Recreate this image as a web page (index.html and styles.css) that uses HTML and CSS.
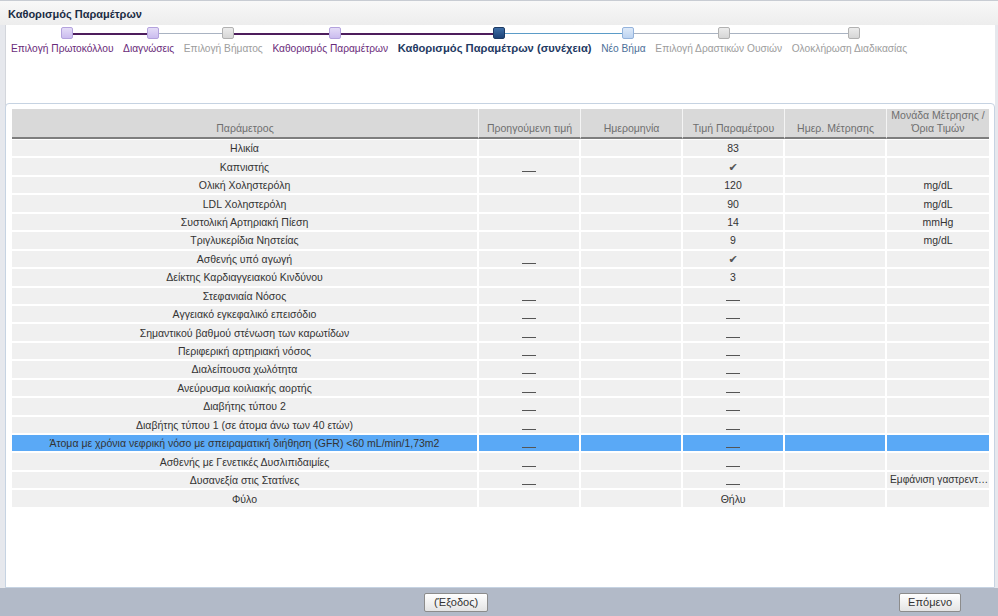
FILE: index.html
```html
<!DOCTYPE html>
<html lang="el">
<head>
<meta charset="utf-8">
<title>Καθορισμός Παραμέτρων</title>
<link rel="stylesheet" href="styles.css">
</head>
<body>
<div class="app">
  <div class="titlebar">Καθορισμός Παραμέτρων</div>
  <div class="main">
    <div class="steps">
      <div class="step done r-purple">
        <div class="mark-row"><span class="mark"></span></div>
        <div class="label">Επιλογή Πρωτοκόλλου</div>
      </div>
      <div class="step done l-purple r-grey">
        <div class="mark-row"><span class="mark"></span></div>
        <div class="label">Διαγνώσεις</div>
      </div>
      <div class="step skipped l-grey r-purple">
        <div class="mark-row"><span class="mark"></span></div>
        <div class="label">Επιλογή Βήματος</div>
      </div>
      <div class="step done l-purple r-purple">
        <div class="mark-row"><span class="mark"></span></div>
        <div class="label">Καθορισμός Παραμέτρων</div>
      </div>
      <div class="step current l-purple r-blue">
        <div class="mark-row"><span class="mark"></span></div>
        <div class="label">Καθορισμός Παραμέτρων (συνέχεια)</div>
      </div>
      <div class="step next l-blue r-grey">
        <div class="mark-row"><span class="mark"></span></div>
        <div class="label">Νέο Βήμα</div>
      </div>
      <div class="step future l-grey r-grey">
        <div class="mark-row"><span class="mark"></span></div>
        <div class="label">Επιλογή Δραστικών Ουσιών</div>
      </div>
      <div class="step future l-grey">
        <div class="mark-row"><span class="mark"></span></div>
        <div class="label">Ολοκλήρωση Διαδικασίας</div>
      </div>
    </div>
    <div class="panel">
      <table class="grid">
        <colgroup>
          <col class="c-param"><col class="c-n"><col class="c-n"><col class="c-n"><col class="c-n"><col class="c-n">
        </colgroup>
        <thead>
          <tr>
            <th>Παράμετρος</th>
            <th>Προηγούμενη τιμή</th>
            <th>Ημερομηνία</th>
            <th>Τιμή Παραμέτρου</th>
            <th>Ημερ. Μέτρησης</th>
            <th>Μονάδα Μέτρησης /<br>Όρια Τιμών</th>
          </tr>
        </thead>
        <tbody>
          <tr><td>Ηλικία</td><td></td><td></td><td>83</td><td></td><td></td></tr>
          <tr><td>Καπνιστής</td><td><span class="dash"></span></td><td></td><td><span class="check">✔</span></td><td></td><td></td></tr>
          <tr><td>Ολική Χοληστερόλη</td><td></td><td></td><td>120</td><td></td><td>mg/dL</td></tr>
          <tr><td>LDL Χοληστερόλη</td><td></td><td></td><td>90</td><td></td><td>mg/dL</td></tr>
          <tr><td>Συστολική Αρτηριακή Πίεση</td><td></td><td></td><td>14</td><td></td><td>mmHg</td></tr>
          <tr><td>Τριγλυκερίδια Νηστείας</td><td></td><td></td><td>9</td><td></td><td>mg/dL</td></tr>
          <tr><td>Ασθενής υπό αγωγή</td><td><span class="dash"></span></td><td></td><td><span class="check">✔</span></td><td></td><td></td></tr>
          <tr><td>Δείκτης Καρδιαγγειακού Κινδύνου</td><td></td><td></td><td>3</td><td></td><td></td></tr>
          <tr><td>Στεφανιαία Νόσος</td><td><span class="dash"></span></td><td></td><td><span class="dash"></span></td><td></td><td></td></tr>
          <tr><td>Αγγειακό εγκεφαλικό επεισόδιο</td><td><span class="dash"></span></td><td></td><td><span class="dash"></span></td><td></td><td></td></tr>
          <tr><td>Σημαντικού βαθμού στένωση των καρωτίδων</td><td><span class="dash"></span></td><td></td><td><span class="dash"></span></td><td></td><td></td></tr>
          <tr><td>Περιφερική αρτηριακή νόσος</td><td><span class="dash"></span></td><td></td><td><span class="dash"></span></td><td></td><td></td></tr>
          <tr><td>Διαλείπουσα χωλότητα</td><td><span class="dash"></span></td><td></td><td><span class="dash"></span></td><td></td><td></td></tr>
          <tr><td>Ανεύρυσμα κοιλιακής αορτής</td><td><span class="dash"></span></td><td></td><td><span class="dash"></span></td><td></td><td></td></tr>
          <tr><td>Διαβήτης τύπου 2</td><td><span class="dash"></span></td><td></td><td><span class="dash"></span></td><td></td><td></td></tr>
          <tr><td>Διαβήτης τύπου 1 (σε άτομα άνω των 40 ετών)</td><td><span class="dash"></span></td><td></td><td><span class="dash"></span></td><td></td><td></td></tr>
          <tr class="selected"><td>Άτομα με χρόνια νεφρική νόσο με σπειραματική διήθηση (GFR) &lt;60 mL/min/1,73m2</td><td><span class="dash"></span></td><td></td><td><span class="dash"></span></td><td></td><td></td></tr>
          <tr><td>Ασθενής με Γενετικές Δυσλιπιδαιμίες</td><td><span class="dash"></span></td><td></td><td><span class="dash"></span></td><td></td><td></td></tr>
          <tr><td>Δυσανεξία στις Στατίνες</td><td><span class="dash"></span></td><td></td><td><span class="dash"></span></td><td></td><td class="left">Εμφάνιση γαστρεντ…</td></tr>
          <tr><td>Φύλο</td><td></td><td></td><td>Θήλυ</td><td></td><td></td></tr>
        </tbody>
      </table>
    </div>
  </div>
  <div class="footer">
    <button class="btn">(Έξοδος)</button>
    <button class="btn">Επόμενο</button>
  </div>
</div>
</body>
</html>
```

FILE: styles.css
```css
html, body {
  margin: 0;
  padding: 0;
  height: 100%;
  overflow: hidden;
}
body {
  font-family: "Liberation Sans", Arial, sans-serif;
  font-size: 11px;
  color: #333;
  background: #e6e8ed;
}
.app {
  width: 998px;
  height: 616px;
  display: flex;
  flex-direction: column;
}
.titlebar {
  border-top: 1px solid #c8ccd3;
  background: linear-gradient(#f8f8f8, #ededed);
  padding: 2px 8px 0;
  box-sizing: border-box;
  height: 25px;
  line-height: 22px;
  font-weight: bold;
  color: #1b2c44;
}
.main {
  flex: 1;
  margin: 0 3px 0 5px;
  background: #fff;
  border-left: 1px solid #d3d6dc;
  display: flex;
  flex-direction: column;
  min-height: 0;
}
.steps {
  height: 76px;
  box-sizing: border-box;
  padding: 2px 0 0 5px;
  display: flex;
  align-items: flex-start;
}
.step {
  display: flex;
  flex-direction: column;
  align-items: stretch;
}
.mark-row {
  position: relative;
  height: 14px;
  display: flex;
  justify-content: center;
  align-items: flex-start;
}
.mark-row::before,
.mark-row::after {
  content: "";
  position: absolute;
  top: 6px;
  height: 1px;
  background: transparent;
}
.mark-row::before { left: 0; right: 50%; }
.mark-row::after { right: 0; left: 50%; }
.l-purple .mark-row::before { background: #4d1d5c; height: 2px; }
.r-purple .mark-row::after { background: #4d1d5c; height: 2px; }
.l-grey .mark-row::before { background: #a9b3c2; }
.r-grey .mark-row::after { background: #a9b3c2; }
.l-blue .mark-row::before { background: #5b9cc8; }
.r-blue .mark-row::after { background: #5b9cc8; }
.mark {
  position: relative;
  z-index: 1;
  width: 10px;
  height: 10px;
  border: 1px solid #aaa;
  border-radius: 2px;
  background: #ddd;
}
.done .mark {
  background: linear-gradient(#e4dcf7, #cbbcef);
  border-color: #b3a2dd;
}
.skipped .mark, .future .mark {
  background: linear-gradient(#ececec, #d6d6d6);
  border-color: #b1b1b1;
}
.current .mark {
  background: linear-gradient(#3e6ea6, #1c4277);
  border-color: #1d3a63;
}
.next .mark {
  background: linear-gradient(#dde9f8, #bcd3f1);
  border-color: #94b3dc;
}
.label {
  margin: 1px 9.6px 0 0;
  line-height: 13px;
  font-size: 10.2px;
  white-space: nowrap;
}
.done .label { color: #6a2b7a; }
.skipped .label, .future .label { color: #9d9d9d; }
.current .label { color: #1f3a63; font-weight: bold; font-size: 11.2px; }
.next .label { color: #4d6f98; }

.panel {
  flex: 1;
  min-height: 0;
  border: 1px solid #c6d3e2;
  border-radius: 4px 4px 0 0;
  margin: 2px 0 0 -1px;
  background: #fff;
  padding: 5px 4px 0 6px;
  overflow: hidden;
}
.grid {
  width: 977px;
  border-collapse: separate;
  border-spacing: 0;
  table-layout: fixed;
  font-size: 10.5px;
}
.c-param { width: 467px; }
.c-n { width: 102px; }
.grid th {
  background: #d9d9d9;
  color: #6f6f6f;
  font-weight: normal;
  height: 26px;
  vertical-align: bottom;
  padding: 0 0 2px;
  line-height: 13px;
  border-right: 1px solid #f4f4f4;
  border-bottom: 2px solid #7e7e7e;
  white-space: nowrap;
}
.grid td {
  background: #f0f0f0;
  height: 16.45px;
  padding: 0 3px;
  text-align: center;
  line-height: 14px;
  border-right: 2px solid #fff;
  border-bottom: 2px solid #fff;
  white-space: nowrap;
  overflow: hidden;
}
.grid th:last-child, .grid td:last-child { border-right: none; }
.grid tbody tr:first-child td { border-top: 1px solid #fff; }
.grid tr.selected td { background: #5aa9f6; }
.grid td.left { text-align: left; padding: 0 0 0 3px; font-size: 10.2px; }
.dash {
  display: inline-block;
  width: 14px;
  height: 1px;
  background: #555;
  vertical-align: -1px;
}
.check {
  font-family: "DejaVu Sans", sans-serif;
  font-size: 11px;
  line-height: 12px;
  color: #555;
}
.footer {
  height: 28px;
  background: #b2bac8;
  display: flex;
  align-items: center;
  justify-content: space-between;
  padding: 0 37px 0 424px;
}
.btn {
  font-family: "Liberation Sans", Arial, sans-serif;
  font-size: 11px;
  color: #333;
  height: 19px;
  padding: 0 8px;
  border: 1px solid #8c8c8c;
  border-radius: 2px;
  background: linear-gradient(#ffffff, #e4e4e4);
  min-width: 58px;
}
.btn:first-child { min-width: 64px; }
```
